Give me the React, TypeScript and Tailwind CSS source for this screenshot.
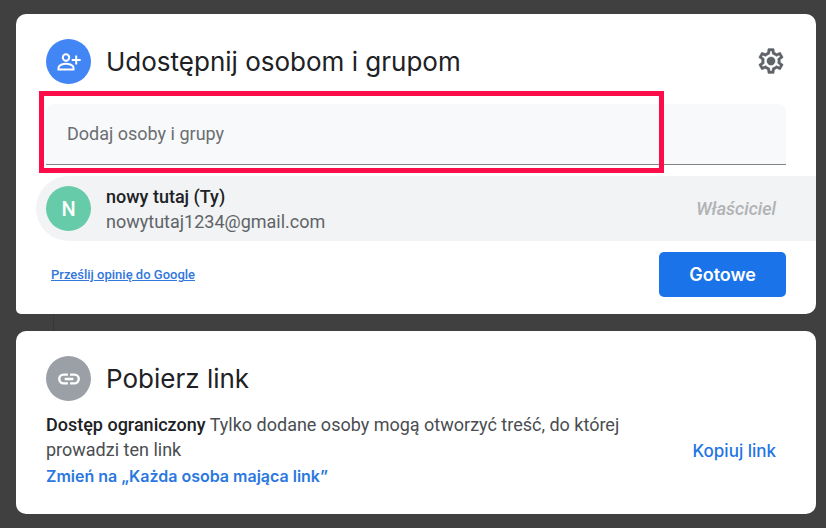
import { useState } from 'react';
import type { ReactNode } from 'react';

const headingFont = "font-['Inter',sans-serif]";

function PersonAddIcon() {
  return (
    <svg viewBox="0 0 24 24" className="h-6 w-6" fill="none" stroke="currentColor" strokeWidth="2" aria-hidden="true">
      <circle cx="9" cy="7.500" r="3.200" />
      <path d="M1.500 19.500v-2c0-2.300 4.500-3.800 7.500-3.800s7.500 1.500 7.500 3.800v2z" />
      <path d="M19.200 5.500v9M14.700 10h9" />
    </svg>
  );
}

function LinkIcon() {
  return (
    <svg viewBox="0 0 24 24" className="h-[26px] w-[26px]" fill="none" stroke="currentColor" strokeWidth="2.200" aria-hidden="true">
      <path d="M11 8H7a4 4 0 0 0 0 8h4M13 8h4a4 4 0 0 1 0 8h-4M8 12h8" />
    </svg>
  );
}

function GearIcon() {
  return (
    <svg viewBox="0 0 24 24" className="h-[30px] w-[30px]" fill="currentColor" stroke="currentColor" strokeWidth=".3" aria-hidden="true">
      <path d="M19.43 12.98c.04-.32.07-.64.07-.98 0-.34-.03-.66-.07-.98l2.11-1.65c.19-.15.24-.42.12-.64l-2-3.46c-.09-.16-.26-.25-.44-.25-.06 0-.12.01-.17.03l-2.49 1c-.52-.4-1.08-.73-1.69-.98l-.38-2.65C14.46 2.18 14.25 2 14 2h-4c-.25 0-.46.18-.49.42l-.38 2.65c-.61.25-1.17.59-1.69.98l-2.49-1c-.06-.02-.12-.03-.18-.03-.17 0-.34.09-.43.25l-2 3.46c-.13.22-.07.49.12.64l2.11 1.65c-.04.32-.07.65-.07.98 0 .33.03.66.07.98l-2.11 1.65c-.19.15-.24.42-.12.64l2 3.46c.09.16.26.25.44.25.06 0 .12-.01.17-.03l2.49-1c.52.4 1.08.73 1.69.98l.38 2.65c.03.24.24.42.49.42h4c.25 0 .46-.18.49-.42l.38-2.65c.61-.25 1.17-.59 1.69-.98l2.49 1c.06.02.12.03.18.03.17 0 .34-.09.43-.25l2-3.46c.12-.22.07-.49-.12-.64l-2.11-1.65zm-1.98-1.71c.04.31.05.52.05.73 0 .21-.02.43-.05.73l-.14 1.13.89.7 1.08.84-.7 1.21-1.27-.51-1.04-.42-.9.68c-.43.32-.84.56-1.25.73l-1.06.43-.16 1.13-.2 1.35h-1.4l-.19-1.35-.16-1.13-1.06-.43c-.43-.18-.83-.41-1.23-.71l-.91-.7-1.06.43-1.27.51-.7-1.21 1.08-.84.89-.7-.14-1.13c-.03-.31-.05-.54-.05-.74s.02-.43.05-.73l.14-1.13-.89-.7-1.08-.84.7-1.21 1.27.51 1.04.42.9-.68c.43-.32.84-.56 1.25-.73l1.06-.43.16-1.13.2-1.35h1.39l.19 1.35.16 1.13 1.06.43c.43.18.83.41 1.23.71l.91.7 1.06-.43 1.27-.51.7 1.21-1.07.85-.89.7.14 1.13z" />
      <circle cx="12" cy="12" r="3.300" />
    </svg>
  );
}

function Avatar({ className, children }: { className: string; children: ReactNode }) {
  return (
    <span className={`flex h-[45px] w-[45px] shrink-0 items-center justify-center rounded-full text-white ${className}`}>
      {children}
    </span>
  );
}

export default function App() {
  const [people, setPeople] = useState('');

  return (
    <main className="min-h-screen bg-[#404040] pt-[14px] pr-[10px] pb-[14px] pl-4 font-['Roboto',sans-serif] text-lg text-[#202124]">
      <section className="rounded-[10px] rounded-bl-[5px] bg-white pt-[25px] pb-[17px]">
        <header className="flex items-center gap-[15px] px-[30px]">
          <Avatar className="bg-[#4285f4]">
            <PersonAddIcon />
          </Avatar>
          <h1 className={`grow text-[26px] leading-9 ${headingFont}`}>Udostępnij osobom i grupom</h1>
          <button type="button" aria-label="Ustawienia" className="pb-0.5 text-[#5f6368]">
            <GearIcon />
          </button>
        </header>

        <div className="relative mx-[30px] mt-5">
          <input
            type="text"
            aria-label="Dodaj osoby i grupy"
            placeholder="Dodaj osoby i grupy"
            value={people}
            onChange={(e) => setPeople(e.target.value)}
            className="block h-[61px] w-full rounded-t-lg border-b border-[#808285] bg-[#f8f9fa] px-[21px] pb-0.5 text-lg outline-none placeholder:text-[#6b6e72]"
          />
          <div className="pointer-events-none absolute -top-[13px] right-[122px] -bottom-2 -left-[7px] border-5 border-[#fb0d49]" />
        </div>

        <div className="mt-[11px] ml-5 flex h-[65px] items-center gap-[15px] rounded-l-full bg-[#f1f3f4] pr-10 pl-[10px]">
          <Avatar className="bg-[#66cba9] text-xl font-medium">N</Avatar>
          <div className="grow leading-[25px]">
            <p className="font-medium">nowy tutaj (Ty)</p>
            <p className="text-[#5f6368]">nowytutaj1234@gmail.com</p>
          </div>
          <span className="font-medium text-[#b0b2b4] italic">Właściciel</span>
        </div>

        <footer className="mt-[11px] flex items-center justify-between pr-[30px] pl-[35px]">
          <a href="#opinia" className="pt-0.5 text-[13px] font-medium text-[#3277dc] underline">
            Prześlij opinię do Google
          </a>
          <button type="button" className={`h-[45px] rounded-[5px] bg-[#1a73e8] px-[30px] font-semibold text-white ${headingFont}`}>
            Gotowe
          </button>
        </footer>
      </section>

      <div className="h-[17px] w-[38px] border-r border-[#38383a]" />

      <section className="rounded-[10px] bg-white px-[30px] pt-[25px] pb-6">
        <header className="flex items-center gap-[15px]">
          <Avatar className="bg-[#9aa0a6]">
            <LinkIcon />
          </Avatar>
          <h2 className={`text-[26px] leading-9 ${headingFont}`}>Pobierz link</h2>
        </header>
        <div className="mt-[11px] flex items-center justify-between gap-[60px] pr-[10px]">
          <div className="leading-[25px]">
            <p className="text-[#4a4d51]">
              <strong className="font-medium text-[#202124]">Dostęp ograniczony</strong> Tylko dodane osoby mogą
              otworzyć treść, do której prowadzi ten link
            </p>
            <button type="button" className={`block text-base leading-7 font-semibold text-[#2b78e0] ${headingFont}`}>
              Zmień na „Każda osoba mająca link”
            </button>
          </div>
          <button type="button" className={`shrink-0 text-[17px] font-medium text-[#1f74e4] ${headingFont}`}>
            Kopiuj link
          </button>
        </div>
      </section>
    </main>
  );
}
